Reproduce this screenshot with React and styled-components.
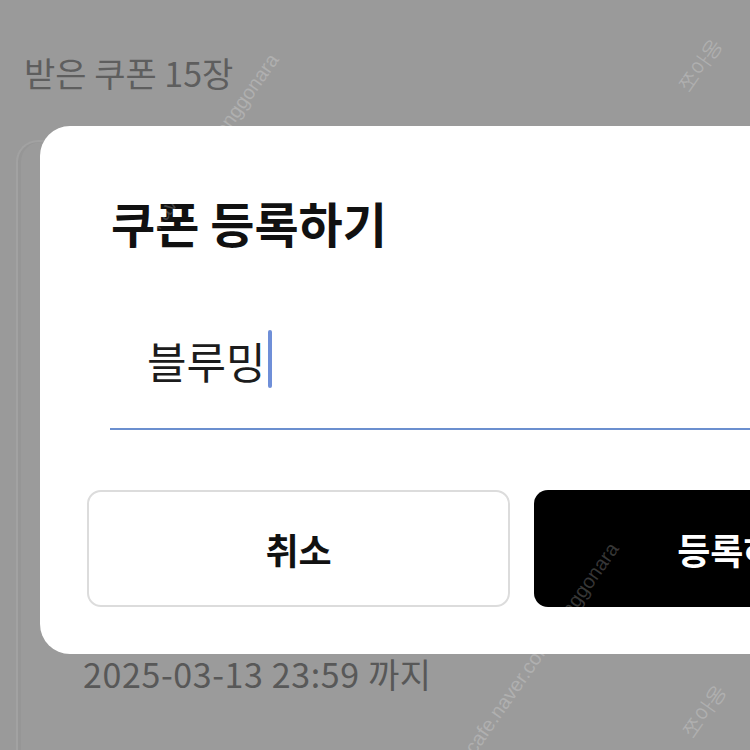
import React from "react";
import styled, { createGlobalStyle } from "styled-components";

const Global = createGlobalStyle`
  html, body { margin: 0; padding: 0; }
  body {
    background: #9a9a9a;
    font-family: "Noto Sans CJK KR", "Noto Sans", sans-serif;
    overflow: hidden;
  }
`;

const Page = styled.div`
  position: relative;
  width: 750px;
  height: 750px;
  overflow: hidden;
  background: #9a9a9a;
  display: flex;
  flex-direction: column;
`;

const Header = styled.div`
  padding: 49px 0 0 24px;
  height: 100px;
  box-sizing: border-box;
  font-size: 34px;
  color: #5e5e5e;
  line-height: 48px;
`;

const BgCard = styled.div`
  flex: 1;
  margin-left: 16px;
  margin-top: 40px;
  border-radius: 22px 0 0 0;
  background: #9b9b9b;
  border-left: 2px solid #a2a2a2;
  border-top: 2px solid #a2a2a2;
  box-shadow: inset 3px 0 0 #969696;
  display: flex;
  flex-direction: column;
  padding: 510px 0 0 65px;
`;

const DateText = styled.div`
  font-family: "Noto Sans CJK KR", "Noto Sans", sans-serif;
  font-size: 34px;
  color: #585858;
  letter-spacing: 0.6px;
  line-height: 44px;
`;

const Modal = styled.div`
  position: absolute;
  left: 40px;
  top: 126px;
  width: 960px;
  height: 528px;
  background: #fff;
  border-radius: 30px;
  box-sizing: border-box;
  padding: 0 47px;
  display: flex;
  flex-direction: column;
`;

const Title = styled.h2`
  margin: 64px 0 0 24px;
  font-size: 48px;
  font-weight: 700;
  color: #111;
  line-height: 64px;
`;

const Field = styled.div`
  margin: 71px 0 0 23px;
  height: 105px;
  border-bottom: 2px solid #6b8fcf;
  display: flex;
  align-items: flex-start;
  padding-left: 37px;
  box-sizing: border-box;
`;

const InputText = styled.span`
  margin-top: 7px;
  font-size: 43px;
  color: #1c1c1c;
  line-height: 56px;
`;

const Caret = styled.span`
  display: inline-block;
  width: 4px;
  height: 58px;
  margin-left: 2px;
  margin-top: 5px;
  border-radius: 2px;
  background: #6f8fd8;
`;

const Buttons = styled.div`
  margin-top: 60px;
  display: flex;
  gap: 24px;
`;

const Button = styled.button`
  flex: 1;
  height: 117px;
  border-radius: 14px;
  box-sizing: border-box;
  font-family: "Noto Sans CJK KR", "Noto Sans", sans-serif;
  font-size: 36px;
  font-weight: 700;
  cursor: pointer;
  border: ${(p) => (p.$primary ? "none" : "2px solid #dcdcdc")};
  background: ${(p) => (p.$primary ? "#000" : "#fff")};
  color: ${(p) => (p.$primary ? "#fff" : "#111")};
`;

const Watermark = styled.span`
  position: absolute;
  left: ${(p) => p.$x}px;
  top: ${(p) => p.$y}px;
  transform: rotate(-55deg);
  transform-origin: left top;
  font-family: "Liberation Sans", Arial, sans-serif;
  font-size: 20px;
  color: rgba(255, 255, 255, 0.22);
  white-space: nowrap;
  pointer-events: none;
`;

const marks = [
  { x: 120, y: 256, t: "cafe.naver.com/joonggonara" },
  { x: 460, y: 745, t: "cafe.naver.com/joonggonara" },
  { x: 672, y: 82, t: "쪼아옹" },
  { x: 676, y: 728, t: "쪼아옹" },
];

export default function App() {
  return (
    <>
      <Global />
      <Page>
        <Header>받은 쿠폰 15장</Header>
        <BgCard>
          <DateText>2025-03-13 23:59 까지</DateText>
        </BgCard>
        <Modal>
          <Title>쿠폰 등록하기</Title>
          <Field>
            <InputText>블루밍</InputText>
            <Caret />
          </Field>
          <Buttons>
            <Button>취소</Button>
            <Button $primary>등록하기</Button>
          </Buttons>
        </Modal>
        {marks.map((m, i) => (
          <Watermark key={i} $x={m.x} $y={m.y}>
            {m.t}
          </Watermark>
        ))}
      </Page>
    </>
  );
}
